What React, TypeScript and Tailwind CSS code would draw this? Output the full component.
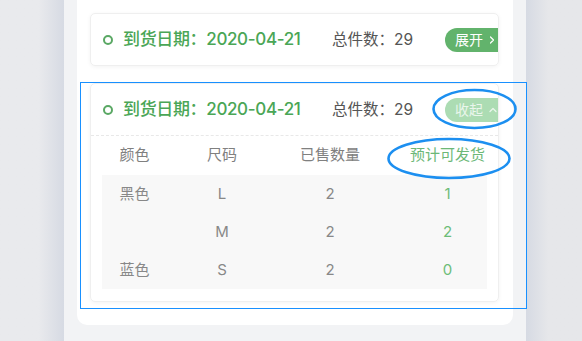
import { ChevronRight, ChevronUp } from "lucide-react";

type Row = { color: string; size: string; sold: number; available: number };

const rows: Row[] = [
  { color: "黑色", size: "L", sold: 2, available: 1 },
  { color: "", size: "M", sold: 2, available: 2 },
  { color: "蓝色", size: "S", sold: 2, available: 0 },
];

function CardHeader({ expanded }: { expanded: boolean }) {
  return (
    <div className="flex h-[51px] items-center pl-[12px]">
      <span className="h-[10px] w-[10px] shrink-0 rounded-full border-[2.5px] border-[#5aa864]" />
      <span className="ml-[10px] text-[17px] font-medium tracking-[-0.35px] text-[#4aa656]">到货日期：2020-04-21</span>
      <span className="ml-auto mr-[32px] text-[15.5px] text-[#555]">总件数：29</span>
      {expanded ? (
        <button className="-mr-[13px] flex h-[24px] w-[66px] shrink-0 items-center rounded-full bg-[#acdcb3] pl-[10px] text-[14px] text-[#eaf6ec]">
          收起
          <ChevronUp className="ml-[4px] h-[12px] w-[12px]" strokeWidth={2.5} aria-hidden />
        </button>
      ) : (
        <button className="-mr-[13px] flex h-[24px] w-[66px] shrink-0 items-center rounded-full bg-[#62b36c] pl-[10px] text-[14px] text-white">
          展开
          <ChevronRight className="ml-[3px] h-[12px] w-[12px]" strokeWidth={2.5} aria-hidden />
        </button>
      )}
    </div>
  );
}

export default function App() {
  return (
    <div className="relative flex h-[341px] w-[582px] overflow-hidden font-['Inter','Noto_Sans_CJK_SC',sans-serif]">
      <div className="w-[64px] shrink-0 bg-gradient-to-r from-[#e9eaed] from-60% to-[#d6dae3]" />

      <div className="flex w-[462px] shrink-0 flex-col bg-[#f2f3f5] px-[13px]">
        <div className="flex flex-col gap-[17px] rounded-b-[10px] bg-white px-[13px] pb-[23px] pt-[13px] pr-[14px]">
          <div className="overflow-hidden rounded-[5px] border border-[#efefef] shadow-[0_1px_4px_rgba(0,0,0,0.05)]">
            <CardHeader expanded={false} />
          </div>

          <div className="overflow-hidden rounded-[5px] border border-[#efefef] shadow-[0_1px_4px_rgba(0,0,0,0.05)]">
            <CardHeader expanded />
            <div className="border-t border-dashed border-[#e8e8e8]" />
            <div className="px-[11px] pb-[12px]">
              <div className="grid h-[39px] grid-cols-[65px_110px_106px_1fr] items-center text-[15px] text-[#808080]">
                <span className="text-center">颜色</span>
                <span className="text-center">尺码</span>
                <span className="text-center">已售数量</span>
                <span className="pl-[25px] text-center text-[#6cb877]">预计可发货</span>
              </div>
              <div className="bg-[#f8f8f8]">
                {rows.map((row) => (
                  <div
                    key={row.size}
                    className="grid h-[38px] grid-cols-[65px_110px_106px_1fr] items-center text-[15px] text-[#888]"
                  >
                    <span className="text-center">{row.color}</span>
                    <span className="text-center">{row.size}</span>
                    <span className="text-center">{row.sold}</span>
                    <span className="pl-[25px] text-center text-[#6dbd78]">{row.available}</span>
                  </div>
                ))}
              </div>
            </div>
          </div>
        </div>
      </div>

      <div className="flex-1 bg-gradient-to-r from-[#d6dae3] to-[#e6e7ea] to-40%" />

      {/* selection annotation */}
      <div className="pointer-events-none absolute left-[80px] top-[82px] h-[227px] w-[447px] border border-[#1890ff]" />
      <svg className="pointer-events-none absolute left-0 top-0" width="582" height="341" aria-hidden>
        <ellipse cx="474.5" cy="109" rx="41" ry="19" fill="none" stroke="#1c8ff0" strokeWidth="2.6" />
        <ellipse cx="449" cy="158.5" rx="60.5" ry="19.5" fill="none" stroke="#1c8ff0" strokeWidth="2.6" />
      </svg>
    </div>
  );
}
